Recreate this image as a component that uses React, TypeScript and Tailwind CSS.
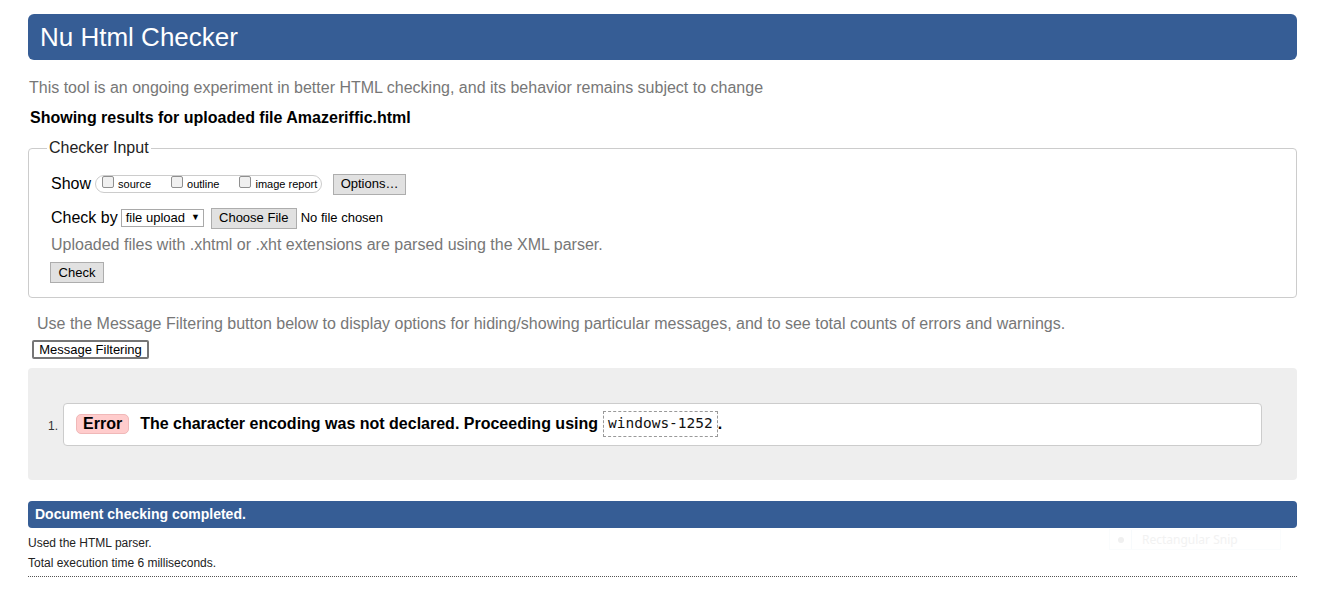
const sans = "font-['Liberation_Sans',Arial,sans-serif]";

function Box({ label }: { label: string }) {
  return (
    <span className="flex items-center">
      <span className="mb-[4px] inline-block h-[12px] w-[12px] rounded-[2px] border border-[#8f8f8f] bg-[#f0f0f0]" />
      <span className="ml-[4px] text-[11px] text-black">{label}</span>
    </span>
  );
}

function WinButton({ children, className = "" }: { children: React.ReactNode; className?: string }) {
  return (
    <span
      className={`inline-flex h-[21px] items-center justify-center border border-[#adadad] bg-[#e1e1e1] text-[13px] text-black ${className}`}
    >
      {children}
    </span>
  );
}

export default function App() {
  return (
    <div className={`relative min-h-[595px] bg-white pl-[28px] pr-[27px] pt-[14px] ${sans}`}>
      <h1 className="flex h-[46px] items-center rounded-[6px] bg-[#365d95] pl-[12px] text-[26px] text-white">
        Nu Html Checker
      </h1>

      <p className="mt-[19px] pl-[1px] text-[16px] leading-[18px] text-[#777]">
        This tool is an ongoing experiment in better HTML checking, and its behavior remains subject to change
      </p>
      <p className="mt-[12px] pl-[2px] text-[16px] font-bold leading-[18px] text-black">
        Showing results for uploaded file Amazeriffic.html
      </p>

      <fieldset className="mt-[12px] rounded-[4px] border border-[#ccc] pb-[13px]">
        <legend className="ml-[18px] px-[2px] text-[16px] leading-[18px] text-[#222]">Checker Input</legend>

        <div className="pl-[22px]">
          <div className="mt-[16px] flex h-[22px] items-center">
            <span className="text-[16px] text-black">Show</span>
            <span className="ml-[4px] flex h-[18px] w-[227px] items-center gap-[20px] rounded-full border border-[#ccc] pl-[6px]">
              <Box label="source" />
              <Box label="outline" />
              <Box label="image report" />
            </span>
            <WinButton className="ml-[11px] w-[73px]">Options…</WinButton>
          </div>

          <div className="mt-[12px] flex h-[22px] items-center">
            <span className="text-[16px] text-black">Check by</span>
            <span className="ml-[3px] flex h-[18px] w-[83px] items-center border border-[#a9a9a9] bg-white pl-[4px] text-[13px] text-black">
              file upload
              <span className="ml-[6px] text-[9px]">▼</span>
            </span>
            <WinButton className="ml-[7px] w-[86px]">Choose File</WinButton>
            <span className="ml-[4px] text-[13px] text-black">No file chosen</span>
          </div>

          <p className="mt-[7px] text-[16px] leading-[18px] text-[#777]">
            Uploaded files with .xhtml or .xht extensions are parsed using the XML parser.
          </p>

          <WinButton className="-ml-[1px] mt-[8px] w-[54px]">Check</WinButton>
        </div>
      </fieldset>

      <p className="mt-[17px] pl-[9px] text-[16px] leading-[18px] text-[#777]">
        Use the Message Filtering button below to display options for hiding/showing particular messages, and to see total counts of errors and warnings.
      </p>
      <div className="ml-[4px] mt-[7px] flex h-[19px] w-[117px] items-center justify-center rounded-[2px] border-2 border-[#767676] bg-white text-[13px] text-black">
        Message Filtering
      </div>

      <div className="mt-[9px] h-[112px] rounded-[4px] bg-[#eee] px-[35px] pt-[35px]">
        <div className="flex">
          <span className="-ml-[15px] w-[15px] pt-[14px] text-[12px] text-[#333]">1.</span>
          <div className="flex h-[43px] flex-1 items-center rounded-[4px] border border-[#ccc] bg-white pl-[12px]">
            <span className="flex h-[20px] items-center rounded-[5px] border border-[#f0b8b8] bg-[#fcc] px-[6px] text-[16px] font-bold text-black">
              Error
            </span>
            <span className="ml-[11px] text-[16px] font-bold text-black">
              The character encoding was not declared. Proceeding using
            </span>
            <code className="ml-[5px] flex h-[26px] items-center border border-dashed border-[#999] px-[4px] font-['DejaVu_Sans_Mono',monospace] text-[14.5px] text-[#111]">
              windows-1252
            </code>
            <span className="text-[16px] font-bold text-black">.</span>
          </div>
        </div>
      </div>

      <div className="mt-[21px] flex h-[27px] items-center rounded-[4px] bg-[#365d95] pl-[7px] text-[14px] font-bold text-white">
        Document checking completed.
      </div>
      <p className="mt-[7px] text-[12px] leading-[16px] text-[#222]">Used the HTML parser.</p>
      <p className="mt-[4px] text-[12px] leading-[16px] text-[#222]">Total execution time 6 milliseconds.</p>
      <div className="mt-[5px] border-t border-dotted border-[#555]" />

      <div className="absolute left-[1109px] top-[529px] flex h-[21px] w-[172px] items-center border border-[#fafcfd]">
        <span className="flex h-full w-[22px] items-center justify-center border-r border-[#f7fafc]">
          <span className="h-[6px] w-[6px] rounded-full bg-[#f0f0f0]" />
        </span>
        <span className="ml-[10px] font-['Noto_Sans',sans-serif] text-[12px] text-[#f2f2f2]">Rectangular Snip</span>
      </div>
    </div>
  );
}
